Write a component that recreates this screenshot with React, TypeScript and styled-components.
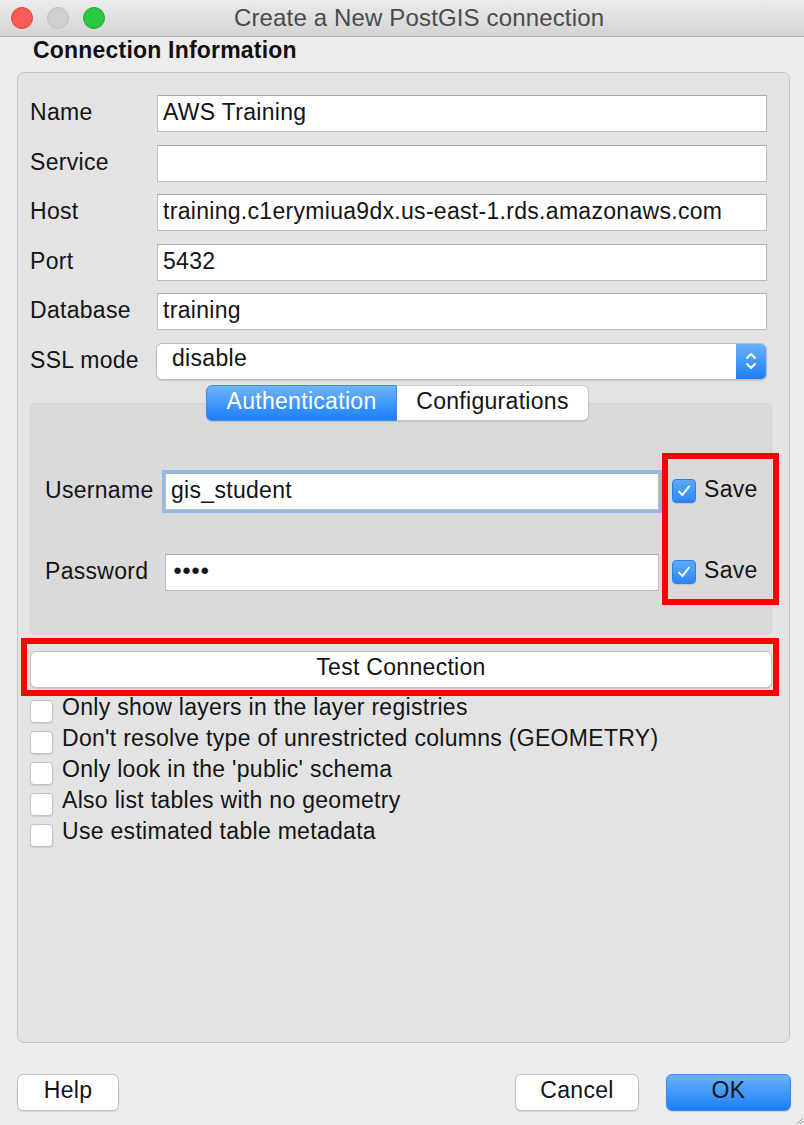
import React from "react";
import styled, { createGlobalStyle } from "styled-components";

const GlobalStyle = createGlobalStyle`
  html, body { margin: 0; padding: 0; background: #ececec; }
  body { font-family: "Liberation Sans", Arial, Helvetica, sans-serif; }
  * { box-sizing: border-box; }
`;

const Window = styled.div`
  position: relative;
  width: 804px;
  height: 1125px;
  background: #ececec;
  display: flex;
  flex-direction: column;
  overflow: hidden;
  font-size: 23px;
  letter-spacing: 0.3px;
  color: #141414;
`;

const TitleBar = styled.div`
  height: 37px;
  background: linear-gradient(#ebebeb, #d4d4d4);
  border-bottom: 1px solid #b2b2b2;
  display: flex;
  align-items: center;
  padding-left: 11px;
`;

const Lights = styled.div`
  display: flex;
  gap: 14px;
  margin-top: -1px;
`;

const Light = styled.span<{ $color: string; $edge: string }>`
  width: 22px;
  height: 22px;
  border-radius: 50%;
  background: ${(p) => p.$color};
  border: 1px solid ${(p) => p.$edge};
`;

const WindowTitle = styled.span`
  margin-left: 129px;
  font-size: 24px;
  letter-spacing: 0.15px;
  color: #4b4b4b;
  margin-top: -1px;
`;

const GroupTitle = styled.div`
  height: 35px;
  padding-left: 33px;
  font-weight: bold;
  line-height: 26px;
  letter-spacing: 0.2px;
  color: #111;
`;

const GroupBox = styled.div`
  margin: 0 14px 0 17px;
  height: 971px;
  border: 1px solid #c3c3c3;
  border-radius: 7px;
  background: #e3e3e3;
  padding: 22px 17px 0 12px;
  display: flex;
  flex-direction: column;
`;

const FormGrid = styled.div`
  display: grid;
  grid-template-columns: 127px 1fr;
  grid-auto-rows: 37px;
  row-gap: 12.5px;
  margin-right: 5px;
  align-items: center;
`;

const Label = styled.span`
  white-space: nowrap;
  margin-top: -2px;
`;

const TextField = styled.div<{ $focused?: boolean }>`
  height: 37px;
  background: #fff;
  border: 1px solid #bcbcbc;
  border-top-color: #aaaaaa;
  display: flex;
  align-items: center;
  padding: 0 0 2px 5px;
  white-space: nowrap;
  overflow: hidden;
  box-shadow: ${(p) => (p.$focused ? "0 0 0 3px #8fbbec" : "none")};
`;

const Dots = styled.span`
  font-size: 15px;
  letter-spacing: 0px;
  padding-left: 2px;
  margin-top: -3px;
`;

const Combo = styled.div`
  height: 37px;
  margin-left: -1px;
  background: #fff;
  border: 1px solid #bdbdbd;
  border-radius: 6px;
  display: flex;
  align-items: center;
  justify-content: space-between;
  box-shadow: 0 1px 1px rgba(0, 0, 0, 0.12);
  overflow: hidden;
`;

const ComboText = styled.span`
  padding-left: 15px;
  margin-top: -6px;
`;

const Stepper = styled.span`
  width: 30px;
  height: 100%;
  background: linear-gradient(#6ab1fb, #1c7ff7);
  display: flex;
  align-items: center;
  justify-content: center;
`;

const TabBar = styled.div`
  margin-top: 5px;
  height: 36px;
  display: flex;
  justify-content: center;
  padding-right: 7px;
  position: relative;
  z-index: 1;
`;

const Tab = styled.div<{ $active?: boolean; $side: "left" | "right" }>`
  width: ${(p) => (p.$side === "left" ? "191px" : "192px")};
  height: 36px;
  display: flex;
  align-items: center;
  justify-content: center;
  padding-bottom: 3px;
  border-radius: ${(p) => (p.$side === "left" ? "6px 0 0 6px" : "0 6px 6px 0")};
  background: ${(p) => (p.$active ? "linear-gradient(#6db4fb, #1b7ff8)" : "#fff")};
  color: ${(p) => (p.$active ? "#fff" : "#141414")};
  border: 1px solid ${(p) => (p.$active ? "#3a8ff2" : "#c6c6c6")};
  border-left-width: ${(p) => (p.$side === "right" ? "0" : "1px")};
  box-shadow: 0 1px 1px rgba(0, 0, 0, 0.12);
`;

const Pane = styled.div`
  margin-top: -18px;
  height: 232px;
  background: #dadada;
  border: 1px solid #d2d2d2;
  border-radius: 5px;
  padding: 69px 0 0 14px;
`;

const AuthGrid = styled.div`
  display: grid;
  grid-template-columns: 120px 494px auto;
  grid-auto-rows: 37px;
  row-gap: 44px;
  align-items: center;
`;

const SaveCell = styled.label`
  display: flex;
  align-items: center;
  gap: 8px;
  margin-left: 13px;
`;

const SaveText = styled.span`
  margin-top: -3px;
`;

const CheckBox = styled.span<{ $checked?: boolean }>`
  width: ${(p) => (p.$checked ? "24px" : "23px")};
  height: ${(p) => (p.$checked ? "24px" : "23px")};
  flex: none;
  border-radius: 4px;
  display: flex;
  align-items: center;
  justify-content: center;
  background: ${(p) => (p.$checked ? "linear-gradient(#5eaafb, #2b86f4)" : "#fff")};
  border: 1px solid ${(p) => (p.$checked ? "#2f80e6" : "#c2c2c2")};
  box-shadow: 0 1px 1px rgba(0, 0, 0, 0.1);
`;

const TestButton = styled.div`
  margin-top: 16px;
  height: 37px;
  background: #fff;
  border: 1px solid #c2c2c2;
  border-radius: 6px;
  display: flex;
  align-items: center;
  justify-content: center;
  padding-bottom: 4px;
  box-shadow: 0 1px 1px rgba(0, 0, 0, 0.12);
`;

const Options = styled.div`
  margin-top: 12px;
  display: flex;
  flex-direction: column;
  gap: 8px;
`;

const OptionRow = styled.div`
  height: 23px;
  display: flex;
  align-items: center;
  gap: 9px;
  white-space: nowrap;
`;

const OptionText = styled.span`
  margin-top: -7px;
`;

const Footer = styled.div`
  margin-top: 31px;
  padding: 0 13px 0 17px;
  display: flex;
  align-items: center;
`;

const Spacer = styled.div`
  flex: 1;
`;

const PushButton = styled.div<{ $width: number; $primary?: boolean }>`
  width: ${(p) => p.$width}px;
  height: 37px;
  border-radius: 6px;
  display: flex;
  align-items: center;
  justify-content: center;
  padding-bottom: 4px;
  background: ${(p) => (p.$primary ? "linear-gradient(#6ab2fb, #1a7ff8)" : "#fff")};
  border: 1px solid ${(p) => (p.$primary ? "#3b8cf0" : "#c2c2c2")};
  box-shadow: 0 1px 1px rgba(0, 0, 0, 0.12);
  & + & {
    margin-left: 27px;
  }
`;

const Highlight = styled.div<{ $x: number; $y: number; $w: number; $h: number }>`
  position: absolute;
  left: ${(p) => p.$x}px;
  top: ${(p) => p.$y}px;
  width: ${(p) => p.$w}px;
  height: ${(p) => p.$h}px;
  border: 6px solid #ff0000;
  pointer-events: none;
  z-index: 5;
`;

const Grip = styled.svg`
  position: absolute;
  right: 0;
  bottom: 0;
`;

const Check = () => (
  <svg width="16" height="16" viewBox="0 0 16 16">
    <path d="M3 8.5 L6.5 12 L13 3.5" fill="none" stroke="#fff" strokeWidth="2" strokeLinecap="round" strokeLinejoin="round" />
  </svg>
);

const options = [
  "Only show layers in the layer registries",
  "Don't resolve type of unrestricted columns (GEOMETRY)",
  "Only look in the 'public' schema",
  "Also list tables with no geometry",
  "Use estimated table metadata",
];

export default function App() {
  return (
    <>
      <GlobalStyle />
      <Window>
        <TitleBar>
          <Lights>
            <Light $color="#fc5b57" $edge="#e0443e" />
            <Light $color="#d0d0d0" $edge="#c0c0c0" />
            <Light $color="#2ac840" $edge="#1aab29" />
          </Lights>
          <WindowTitle>Create a New PostGIS connection</WindowTitle>
        </TitleBar>

        <GroupTitle>Connection Information</GroupTitle>

        <GroupBox>
          <FormGrid>
            <Label>Name</Label>
            <TextField>AWS Training</TextField>
            <Label>Service</Label>
            <TextField />
            <Label>Host</Label>
            <TextField>training.c1erymiua9dx.us-east-1.rds.amazonaws.com</TextField>
            <Label>Port</Label>
            <TextField>5432</TextField>
            <Label>Database</Label>
            <TextField>training</TextField>
            <Label>SSL mode</Label>
            <Combo>
              <ComboText>disable</ComboText>
              <Stepper>
                <svg width="14" height="22" viewBox="0 0 14 22">
                  <path d="M3 8 L7 4 L11 8" fill="none" stroke="#fff" strokeWidth="2" strokeLinecap="round" strokeLinejoin="round" />
                  <path d="M3 14 L7 18 L11 14" fill="none" stroke="#fff" strokeWidth="2" strokeLinecap="round" strokeLinejoin="round" />
                </svg>
              </Stepper>
            </Combo>
          </FormGrid>

          <TabBar>
            <Tab $active $side="left">Authentication</Tab>
            <Tab $side="right">Configurations</Tab>
          </TabBar>

          <Pane>
            <AuthGrid>
              <Label>Username</Label>
              <TextField $focused>gis_student</TextField>
              <SaveCell>
                <CheckBox $checked>
                  <Check />
                </CheckBox>
                <SaveText>Save</SaveText>
              </SaveCell>
              <Label>Password</Label>
              <TextField>
                <Dots>●●●●</Dots>
              </TextField>
              <SaveCell>
                <CheckBox $checked>
                  <Check />
                </CheckBox>
                <SaveText>Save</SaveText>
              </SaveCell>
            </AuthGrid>
          </Pane>

          <TestButton>Test Connection</TestButton>

          <Options>
            {options.map((o) => (
              <OptionRow key={o}>
                <CheckBox />
                <OptionText>{o}</OptionText>
              </OptionRow>
            ))}
          </Options>
        </GroupBox>

        <Footer>
          <PushButton $width={102}>Help</PushButton>
          <Spacer />
          <PushButton $width={124}>Cancel</PushButton>
          <PushButton $width={125} $primary>
            OK
          </PushButton>
        </Footer>

        <Highlight $x={662} $y={453} $w={117} $h={152} />
        <Highlight $x={21} $y={638} $w={758} $h={58} />

        <Grip width="10" height="10" viewBox="0 0 10 10">
          <path d="M9 3 L3 9 M9 6 L6 9" stroke="#9a9a9a" strokeWidth="1" />
        </Grip>
      </Window>
    </>
  );
}
